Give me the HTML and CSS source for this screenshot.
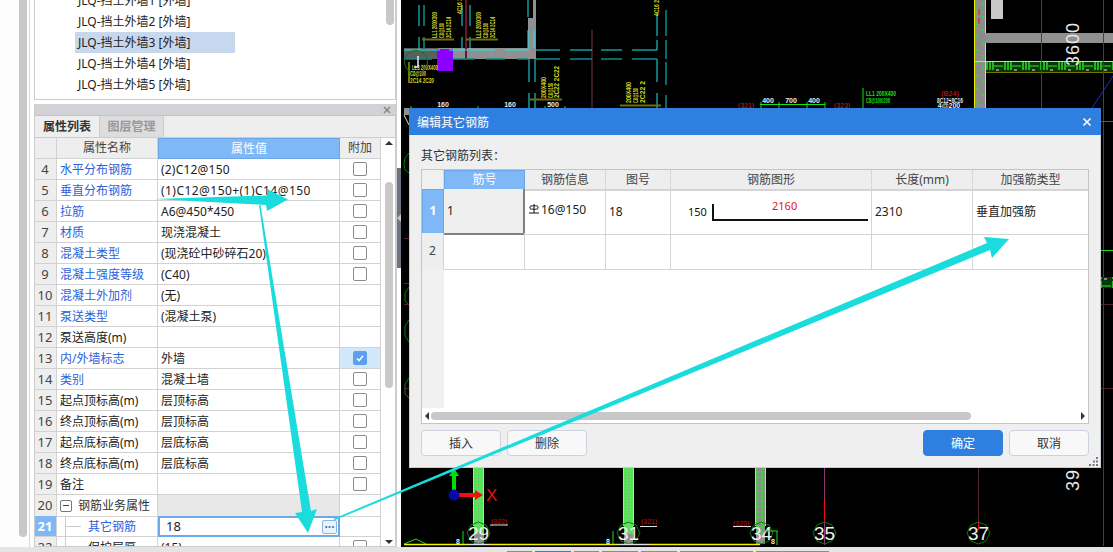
FILE: index.html
```html
<!DOCTYPE html>
<html lang="zh">
<head>
<meta charset="utf-8">
<title>编辑其它钢筋</title>
<link rel="stylesheet" href="styles.css">
</head>
<body>
<div class="page">
  <div class="main">
    <aside class="left">
      <div class="strip"><div class="strip-thumb"></div></div>
      <div class="panels">
        <section class="list-panel">
          <ul class="wall-list">
            <li><span>JLQ-挡土外墙1 [外墙]</span></li>
            <li><span>JLQ-挡土外墙2 [外墙]</span></li>
            <li class="sel"><span>JLQ-挡土外墙3 [外墙]</span></li>
            <li><span>JLQ-挡土外墙4 [外墙]</span></li>
            <li><span>JLQ-挡土外墙5 [外墙]</span></li>
          </ul>
          <div class="list-scroll"></div>
        </section>
        <section class="prop-panel">
          <div class="prop-head"><svg class="close-mini" viewBox="0 0 8 8"><path d="M1 1L7 7M7 1L1 7"/></svg></div>
          <div class="tabs"><div class="tab on">属性列表</div><div class="tab">图层管理</div></div>
          <div class="prop-body">
            <div class="prop-table">
              <div class="row head"><div class="c n"></div><div class="c name">属性名称</div><div class="c val hl">属性值</div><div class="c add">附加</div></div>
              <div class="row"><div class="c n">4</div><div class="c name link">水平分布钢筋</div><div class="c val lat">(2)C12@150</div><div class="c add"><i class="cb"></i></div></div>
              <div class="row"><div class="c n">5</div><div class="c name link">垂直分布钢筋</div><div class="c val wide">(1)C12@150+(1)C14@150</div><div class="c add"><i class="cb"></i></div></div>
              <div class="row"><div class="c n">6</div><div class="c name link">拉筋</div><div class="c val">A6@450*450</div><div class="c add"><i class="cb"></i></div></div>
              <div class="row"><div class="c n">7</div><div class="c name link">材质</div><div class="c val">现浇混凝土</div><div class="c add"><i class="cb"></i></div></div>
              <div class="row"><div class="c n">8</div><div class="c name link">混凝土类型</div><div class="c val">(现浇砼中砂碎石20)</div><div class="c add"><i class="cb"></i></div></div>
              <div class="row"><div class="c n">9</div><div class="c name link">混凝土强度等级</div><div class="c val">(C40)</div><div class="c add"><i class="cb"></i></div></div>
              <div class="row"><div class="c n">10</div><div class="c name link">混凝土外加剂</div><div class="c val">(无)</div><div class="c add"></div></div>
              <div class="row"><div class="c n">11</div><div class="c name link">泵送类型</div><div class="c val">(混凝土泵)</div><div class="c add"></div></div>
              <div class="row"><div class="c n">12</div><div class="c name">泵送高度(m)</div><div class="c val"></div><div class="c add"></div></div>
              <div class="row"><div class="c n">13</div><div class="c name link">内/外墙标志</div><div class="c val">外墙</div><div class="c add checked"><i class="cb on"><svg viewBox="0 0 14 14"><path d="M3.500 7.500L6 10L10.500 4.500"/></svg></i></div></div>
              <div class="row"><div class="c n">14</div><div class="c name link">类别</div><div class="c val">混凝土墙</div><div class="c add"><i class="cb"></i></div></div>
              <div class="row"><div class="c n">15</div><div class="c name">起点顶标高(m)</div><div class="c val">层顶标高</div><div class="c add"><i class="cb"></i></div></div>
              <div class="row"><div class="c n">16</div><div class="c name">终点顶标高(m)</div><div class="c val">层顶标高</div><div class="c add"><i class="cb"></i></div></div>
              <div class="row"><div class="c n">17</div><div class="c name">起点底标高(m)</div><div class="c val">层底标高</div><div class="c add"><i class="cb"></i></div></div>
              <div class="row"><div class="c n">18</div><div class="c name">终点底标高(m)</div><div class="c val">层底标高</div><div class="c add"><i class="cb"></i></div></div>
              <div class="row"><div class="c n">19</div><div class="c name">备注</div><div class="c val"></div><div class="c add"><i class="cb"></i></div></div>
              <div class="row"><div class="c n">20</div><div class="c name group"><i class="minus"></i><span>钢筋业务属性</span></div><div class="c val grey"></div><div class="c add"></div></div>
              <div class="row"><div class="c n cur">21</div><div class="c name tree link">其它钢筋</div><div class="c val edit"><span>18</span><button class="dots" type="button">···</button></div><div class="c add"></div></div>
              <div class="row"><div class="c n">22</div><div class="c name tree">保护层厚</div><div class="c val">(15)</div><div class="c add"><i class="cb"></i></div></div>
            </div>
            <div class="prop-scroll">
              <i class="tri up"></i>
              <div class="prop-track"><div class="prop-thumb"></div></div>
              <i class="tri down"></i>
            </div>
          </div>
        </section>
      </div>
      <div class="splitter"><i></i></div>
    </aside>

    <div class="canvas">
      <svg class="cad" viewBox="401 0 712 547" width="712" height="547">
        <defs>
          <pattern id="band" width="18" height="11" patternUnits="userSpaceOnUse" x="985" y="61">
            <rect width="18" height="11" fill="#063806"/>
            <path d="M2 0V9M5 0V9M8 0V9" stroke="#2ee62e" stroke-width="1.4"/>
            <path d="M9 5H18" stroke="#2ee62e"/>
            <path d="M11 9h3" stroke="#e6e6e6"/>
          </pattern>
          <pattern id="dots" width="10" height="13" patternUnits="userSpaceOnUse" x="975" y="0">
            <rect width="10" height="13" fill="#8c8c8c"/>
            <rect x="7" y="3" width="2" height="2" fill="#22e622"/>
            <rect x="1" y="10" width="2" height="2" fill="#22e622"/>
          </pattern>
          <pattern id="col" width="3" height="3" patternUnits="userSpaceOnUse">
            <rect width="3" height="3" fill="#58e458"/>
            <rect x="1" y="1" width="1" height="1" fill="#90a890"/>
          </pattern>
          <pattern id="col2" width="5" height="5" patternUnits="userSpaceOnUse">
            <rect width="5" height="5" fill="#8c8c8c"/>
            <path d="M0 2H5M2 0V5" stroke="#30e030"/>
          </pattern>
        </defs>

        <!-- walls -->
        <rect class="wall-d" x="404" y="48" width="34" height="11"/>
        <rect class="wall" x="438" y="48" width="98" height="11"/>
        <rect class="wall" x="528" y="18" width="8" height="30"/>
        <rect class="wall" x="533" y="0" width="3" height="20"/>
        <rect class="purple" x="437" y="49" width="16" height="22"/>
        <path class="dred" d="M466 0V60"/>
        <path class="dred2" d="M592 30V108"/>

        <!-- cyan members -->
        <path class="cy" d="M419 5V26M419 37V50M462 5V26M462 37V50M470 5V26M470 37V50M528 0V17M528 30V50M534 30V48M529 59V82M529 93V108M535 59V82M535 93V108M657 13V36M657 40V50M657 59V82M657 93V108M404 50H440M449 50H468M470 50H495M505 50H527M536 50H560M570 50H592M601 50H622M632 50H657"/>
        <path class="te" d="M424 5V26M424 37V50M404 59H432M453 59H475M486 59H505M517 59H528M536 59H560M570 59H592M601 59H622M632 59H657M666 10V36M666 40V59M666 62V85M666 95V108"/>

        <!-- yellow notes -->
        <g class="note">
          <text transform="translate(437 38) rotate(-90)" textLength="26" lengthAdjust="spacingAndGlyphs">LL1 200X300</text>
          <text transform="translate(444 38) rotate(-90)" textLength="15" lengthAdjust="spacingAndGlyphs">C8@100</text>
          <text transform="translate(451 38) rotate(-90)" textLength="21" lengthAdjust="spacingAndGlyphs">2C14 2C14</text>
          <text transform="translate(481 38) rotate(-90)" textLength="26" lengthAdjust="spacingAndGlyphs">LL2 200X300</text>
          <text transform="translate(488 38) rotate(-90)" textLength="15" lengthAdjust="spacingAndGlyphs">C8@100</text>
          <text transform="translate(495 38) rotate(-90)" textLength="21" lengthAdjust="spacingAndGlyphs">2C14 2C14</text>
          <text transform="translate(462 14) rotate(-90)" textLength="16" lengthAdjust="spacingAndGlyphs">4C16 2</text>
          <text transform="translate(659 16) rotate(-90)" textLength="16" lengthAdjust="spacingAndGlyphs">4C16 2</text>
          <text transform="translate(546 98) rotate(-90)" textLength="21" lengthAdjust="spacingAndGlyphs">200X400</text>
          <text transform="translate(553 98) rotate(-90)" textLength="15" lengthAdjust="spacingAndGlyphs">C8@150</text>
          <text transform="translate(559 98) rotate(-90)" textLength="32" lengthAdjust="spacingAndGlyphs">2C22 2C22</text>
          <text transform="translate(631 103) rotate(-90)" textLength="21" lengthAdjust="spacingAndGlyphs">200X400</text>
          <text transform="translate(638 103) rotate(-90)" textLength="15" lengthAdjust="spacingAndGlyphs">C8@150</text>
          <text transform="translate(645 103) rotate(-90)" textLength="22" lengthAdjust="spacingAndGlyphs">2C22 2</text>
          <text x="412" y="70" textLength="26" lengthAdjust="spacingAndGlyphs">LL3 200X400</text>
          <text x="410" y="76" textLength="16" lengthAdjust="spacingAndGlyphs">C8@100</text>
          <text x="410" y="83" textLength="24" lengthAdjust="spacingAndGlyphs">2C14 2C20</text>
        </g>
        <path class="yl" d="M409 62V83"/>
        <path class="ol" d="M422 39.500H454M466 39.500H498M530 99.500H562M620 105.500H661"/>
        <circle class="ring" cx="416" cy="62" r="11.500"/>
        <path class="wh2" d="M418 56V67H414"/>

        <!-- dims -->
        <g class="dim">
          <text x="443" y="107">160</text>
          <text x="510" y="107">160</text>
          <text x="553" y="107">500</text>
          <text x="768" y="103">400</text>
          <text x="791" y="103">700</text>
          <text x="814" y="103">400</text>
          <text x="950" y="103" textLength="26" lengthAdjust="spacingAndGlyphs">8C12+8C16</text>
          <text x="949" y="108">4@200</text>
        </g>
        <path class="gn" d="M760 104.500H825M761 102V108M779 102V108M807 102V108M825 102V108M411 106V108M478 106V108M545 106V108M565 106V108M863 88V108"/>
        <g class="red">
          <text x="746" y="108">(321)</text>
          <text x="842" y="108">(323)</text>
          <text x="950" y="96">(B24)</text>
        </g>
        <g class="gnote">
          <text x="866" y="96" textLength="30" lengthAdjust="spacingAndGlyphs">LL1 200X400</text>
          <text x="866" y="103" textLength="24" lengthAdjust="spacingAndGlyphs">C8@100/200</text>
        </g>

        <!-- right side -->
        <rect fill="url(#dots)" x="975" y="0" width="10" height="108"/>
        <path class="yl" d="M974.500 0V108M985.500 0V108M975 61.500H1113M985 72H1113"/>
        <path class="redl" d="M979 9V15M979 18V24"/>
        <rect class="wall" x="985" y="33" width="128" height="10"/>
        <rect class="block" x="991" y="0" width="12" height="19"/>
        <rect fill="url(#band)" x="986" y="62" width="127" height="10"/>
        <path class="dgn" d="M1041.500 0V108M1103.500 0V546"/>
        <text class="big" transform="translate(1079 66) rotate(-90)">3600</text>
        <path class="blue" d="M1113 76L1092 108"/>
        <path class="mag" d="M1089 121.500H1113"/>
        <path class="brg" d="M1089 250.500H1113"/>
        <rect fill="url(#band)" x="1100" y="277" width="13" height="11"/>
        <path class="dmag" d="M1089 304.500H1113M1089 388.500H1113"/>
        <text class="big" transform="translate(1079 491) rotate(-90)">39</text>

        <!-- left of dialog -->
        <rect class="wall" x="404" y="108" width="5" height="7"/>
        <path class="wh" d="M404 115L409 125"/>
        <path class="ring" d="M409 153L405 158L404 165L405 170L409 173M409 287L405 293V301L409 305M409 320L405 326V336L409 342M409 378L405 384V394L409 398"/>
        <path class="dmag" d="M404 238.500H409M404 283.500H409M404 304.500H409M404 388.500H409"/>

        <!-- columns below dialog -->
        <rect fill="url(#col)" x="474" y="468" width="10" height="66"/>
        <path class="yl" d="M473.500 468V526M483.500 468V526M623.500 468V526M633.500 468V526M755.500 468V526M765.500 468V526"/>
        <rect fill="url(#col)" x="624" y="468" width="9" height="66"/>
        <rect fill="url(#col2)" x="756" y="468" width="9" height="66"/>
        <rect class="wall" x="474" y="534" width="10" height="10"/>
        <rect class="wall" x="624" y="534" width="9" height="10"/>
        <rect class="wall" x="756" y="534" width="9" height="10"/>
        <path class="mag" d="M824.500 468V500M824.500 520V545"/>
        <path class="redl" d="M824.500 500V522M978.500 522V530"/>
        <path class="dmag" d="M978.500 468V522"/>

        <polygon class="ring" points="478.500,522 486,525 490,533 486,541 478.500,544 471,541 467,533 471,525"/>
        <polygon class="ring" points="628.500,522 636,525 640,533 636,541 628.500,544 621,541 617,533 621,525"/>
        <polygon class="ring" points="761.500,522 769,525 773,533 769,541 761.500,544 754,541 750,533 754,525"/>
        <polygon class="ring" points="824.500,522 832,525 836,533 832,541 824.500,544 817,541 813,533 817,525"/>
        <polygon class="ring" points="978.500,522 986,525 990,533 986,541 978.500,544 971,541 967,533 971,525"/>
        <g class="axis">
          <text x="478.500" y="540">29</text>
          <text x="628.500" y="540">31</text>
          <text x="761.500" y="540">34</text>
          <text x="824.500" y="540">35</text>
          <text x="978.500" y="540">37</text>
        </g>
        <g class="dred-t">
          <text x="491" y="524">(322)</text>
          <text x="641" y="524">(321)</text>
          <text x="733" y="526">(320)</text>
        </g>
        <path class="wh" d="M490 525H508M640 526.500H657M733 526.500H751"/>
        <path class="gn" d="M463 531V545M613 531V545M777 531V545M765 531H778"/>
        <path class="gn" d="M404 544L416 539L426 544"/>
        <path class="yl2" d="M404 544.500H760"/>
        <path class="wh" d="M468 544.500H490M618 544.500H650"/>
        <g class="dim">
          <text x="458" y="544">8</text>
          <text x="608" y="544">8</text>
          <text x="773" y="544">8</text>
        </g>

        <!-- origin gizmo -->
        <path class="gz-g" d="M454 494V476"/>
        <polygon class="gz-gh" points="454,468 449,476 459,476"/>
        <path class="gz-r" d="M454 495H476"/>
        <polygon class="gz-rh" points="483,495 475,490 475,500"/>
        <circle class="gz-b" cx="454" cy="495" r="5.500"/>
        <text class="gz-x" x="486" y="501">X</text>
      </svg>

      <div class="dialog">
        <header class="dlg-title">
          <span>编辑其它钢筋</span>
          <svg class="dlg-x" viewBox="0 0 10 10"><path d="M1.500 1.500L8.500 8.500M8.500 1.500L1.500 8.500"/></svg>
        </header>
        <div class="dlg-body">
          <div class="dlg-label">其它钢筋列表：</div>
          <div class="rebar">
            <div class="rb-row rb-head">
              <div class="rb n"></div><div class="rb hl">筋号</div><div class="rb">钢筋信息</div><div class="rb">图号</div><div class="rb">钢筋图形</div><div class="rb">长度(mm)</div><div class="rb">加强筋类型</div>
            </div>
            <div class="rb-row rb-one">
              <div class="rb n cur">1</div>
              <div class="rb cell focus">1</div>
              <div class="rb cell info"><svg class="grade" viewBox="0 0 10 10"><path d="M5 0V9M1 2.500C1 1.500 9 1.500 9 2.500V4.500C9 5.500 1 5.500 1 4.500ZM0 9H10"/></svg><span>16@150</span></div>
              <div class="rb cell">18</div>
              <div class="rb cell shape"><span class="sh-a">150</span><div class="sh-line"><span class="sh-b">2160</span></div></div>
              <div class="rb cell">2310</div>
              <div class="rb cell">垂直加强筋</div>
            </div>
            <div class="rb-row rb-two">
              <div class="rb n">2</div><div class="rb"></div><div class="rb"></div><div class="rb"></div><div class="rb"></div><div class="rb"></div><div class="rb"></div>
            </div>
            <div class="rb-fill"><div class="rb-fill-n"></div></div>
            <div class="rb-scroll">
              <i class="tri left"></i>
              <div class="rb-track"><div class="rb-thumb"></div></div>
              <i class="tri right"></i>
            </div>
          </div>
          <div class="dlg-btns">
            <button class="btn" type="button">插入</button>
            <button class="btn" type="button">删除</button>
            <span class="spacer"></span>
            <button class="btn primary" type="button">确定</button>
            <button class="btn" type="button">取消</button>
          </div>
          <svg class="grip" viewBox="0 0 9 9"><path d="M7 0h2v2H7zM4 3.500h2v2H4zM7 3.500h2v2H7zM0 7h2v2H0zM3.500 7h2v2h-2zM7 7h2v2H7z"/></svg>
        </div>
      </div>
    </div>
  </div>

  <div class="status">
    <i class="s s1"></i><i class="s s2"></i><i class="s s3"></i><i class="s s4"></i><i class="s s4"></i><i class="s s5"></i><i class="s s5"></i>
  </div>

  <svg class="arrows" viewBox="0 0 1113 552" width="1113" height="552">
    <polygon points="155,199 267,195.500 267,189 288,199.500 267,211 266,205"/>
    <polygon points="259,205 260.500,205 311,511 317,509 308,533 295,513 302,512"/>
    <polygon points="333,519 987,243 984,237 1009,239 992,258 990,250 335,520"/>
  </svg>
</div>
</body>
</html>
```

FILE: styles.css
```css
* { box-sizing: border-box; }
html, body { margin: 0; padding: 0; }
body {
  font-family: "Noto Sans", "Noto Sans CJK SC", sans-serif;
  font-size: 12px;
  color: #222;
  background: #fff;
  overflow: hidden;
}
.page { position: relative; width: 1113px; height: 552px; overflow: hidden; }
.main { display: flex; height: 547px; }

/* left column */
.left { width: 401px; display: flex; flex: none; background: #fff; }
.strip { width: 30px; flex: none; padding-left: 19px; border-right: 1px solid #d8d8d8; background: #fdfdfd; }
.strip-thumb { width: 8px; height: 537px; background: #c8c8c8; border-radius: 0 0 4px 4px; }
.panels { width: 363px; margin-left: 4px; flex: none; display: flex; flex-direction: column; gap: 4px; border-right: 1px solid #ccc; }
.splitter { width: 4px; height: 100px; margin-top: 168px; background: #6b7680; display: flex; align-items: center; }
.splitter i { width: 0; height: 0; border: 4px solid transparent; border-left-width: 0; border-right-color: #c4c8cc; }

.list-panel { height: 100px; flex: none; position: relative; border: 1px solid #ccc; border-top: 0; overflow: hidden; background: #fff; }
.wall-list { list-style: none; margin: -10px 0 0; padding: 0 0 0 40px; }
.wall-list li { height: 21px; line-height: 22px; }
.wall-list span { display: block; width: 160px; height: 21px; padding-left: 3px; }
.wall-list .sel span { background: #c7d7ee; }
.list-scroll { position: absolute; right: 1px; top: 0; width: 8px; height: 25px; background: #c8c8c8; border-radius: 0 0 4px 4px; }

.prop-panel { flex: 1; min-height: 0; display: flex; flex-direction: column; overflow: hidden; border: 1px solid #ccc; border-top: 0; }
.prop-head { height: 12px; flex: none; background: #d0d2d6; display: flex; justify-content: flex-end; align-items: center; padding-right: 4px; border-bottom: 1px solid #c4c4c4; }
.close-mini { width: 8px; height: 8px; }
.close-mini path { stroke: #888; stroke-width: 1.6; fill: none; }
.tabs { height: 22px; flex: none; display: flex; background: #eee; border-bottom: 1px solid #ccc; }
.tab { width: 65px; text-align: center; line-height: 21px; font-size: 12px; color: #999; background: #ddd; border-right: 1px solid #ccc; font-weight: 700; }
.tab.on { color: #333; background: #eee; border-right: 0; width: 64px; }
.tab + .tab { border-left: 1px solid #ccc; }

.prop-body { flex: 1; min-height: 0; display: flex; overflow: hidden; }
.prop-table { width: 346px; flex: none; }
.row { display: grid; grid-template-columns: 22px 101px 182px 41px; height: 21px; }
.c { border-right: 1px solid #d2d2d2; border-bottom: 1px solid #d2d2d2; line-height: 21px; padding-left: 3px; white-space: nowrap; overflow: hidden; color: #222; }
.c.n { background: #eee; padding: 0 1px 0 0; text-align: center; font-size: 13px; color: #444; }
.c.add { padding: 0; display: flex; align-items: center; justify-content: center; }
.c.link { color: #2a62dc; }
.c.lat { letter-spacing: .2px; }
.c.wide { letter-spacing: .45px; }
.head .c { background: #eee; text-align: center; color: #444; padding: 0; line-height: 20px; }
.head .c.hl { background: #7eb8f7; color: #fff; border: 1px solid #6aa6e6; }
.cb { display: block; width: 14px; height: 14px; border: 1px solid #8a8a8a; border-radius: 2px; background: #fff; }
.cb.on { background: #5a9ff0; border-color: #5a9ff0; }
.cb svg { display: block; width: 12px; height: 12px; }
.cb path { fill: none; stroke: #fff; stroke-width: 1.800; }
.c.checked { background: #d3e7fb; }
.c.grey { background: #e8e8e8; }
.c.group { display: flex; align-items: center; position: relative; overflow: visible; color: #333; }
.minus { width: 12px; height: 12px; margin-right: 6px; border: 1px solid #777; border-radius: 2px; background: #fff; position: relative; flex: none; }
.minus::after { content: ""; position: absolute; left: 2px; right: 2px; top: 4px; height: 1px; background: #444; }
.c.tree { padding-left: 31px; position: relative; }
.c.tree::before { content: ""; position: absolute; left: 8px; top: -1px; bottom: -1px; width: 1px; background: #ccc; }
.c.tree::after { content: ""; position: absolute; left: 8px; top: 10px; width: 16px; height: 1px; background: #ccc; }
.c.n.cur { background: #7eb8f7; color: #fff; font-weight: 700; }
.c.edit { border: 2px solid #6aaae8; display: flex; align-items: center; padding-left: 6px; line-height: 17px; font-size: 13px; justify-content: space-between; }
.dots { width: 15px; height: 14px; margin-right: 1px; padding: 0; border: 1px solid #88b4e8; border-radius: 2px; background: #eaf3fd; color: #3c72b8; font: 700 12px/10px "Noto Sans", sans-serif; }

.prop-scroll { width: 16px; flex: none; position: relative; display: flex; flex-direction: column; align-items: center; }
.tri { display: block; width: 0; height: 0; border: 4px solid transparent; flex: none; }
.tri.up { border-top: 0; border-bottom: 4px solid #333; margin-top: 3px; }
.tri.down { border-bottom: 0; border-top: 4px solid #333; position: absolute; top: 402px; }
.prop-track { width: 8px; margin-top: 37px; }
.prop-thumb { height: 206px; background: #c8c8c8; border-radius: 4px; }

/* canvas */
.canvas { flex: 1; position: relative; background: #000; overflow: hidden; }
.cad { display: block; }
.cad text { font-family: "Liberation Sans", sans-serif; }
.wall { fill: #909090; }
.wall-d { fill: #5e5e5e; }
.purple { fill: #8a00ff; }
.block { fill: #c8c8c8; }
.dred { stroke: #701030; stroke-width: 2; fill: none; }
.dred2 { stroke: #3c1828; stroke-width: 2; fill: none; }
.cy { stroke: #18e8ee; fill: none; stroke-width: 1; }
.te { stroke: #0a8c90; fill: none; stroke-width: 1.500; }
.note text { fill: #d8d820; font-size: 7px; font-weight: 700; }
.yl { stroke: #e8e800; fill: none; }
.yl2 { stroke: #f0f000; fill: none; stroke-width: 1.500; }
.ol { stroke: #6e6e10; fill: none; stroke-width: 2; }
.ring { stroke: #0c7a0c; fill: none; }
.wh { stroke: #e0e0e0; fill: none; }
.wh2 { stroke: #f0f0f0; fill: none; stroke-width: 1.500; }
.dim text { fill: #e8e8e8; font-size: 7px; font-weight: 700; text-anchor: middle; }
.gn { stroke: #18e018; fill: none; }
.dgn { stroke: #0a6a0a; fill: none; }
.brg { stroke: #18e018; fill: none; }
.blue { stroke: #1030d0; fill: none; }
.mag { stroke: #8a3a70; fill: none; }
.dmag { stroke: #4c2038; fill: none; }
.redl { stroke: #e81010; fill: none; }
.red text { fill: #b00c0c; font-size: 7px; font-weight: 700; text-anchor: middle; }
.dred-t text { fill: #900c0c; font-size: 7px; font-weight: 700; }
.gnote text { fill: #18e018; font-size: 7px; font-weight: 700; }
.big { fill: #e8e8e8; font-size: 18px; letter-spacing: 1px; }
.axis text { fill: #f0f0f0; font-size: 19px; text-anchor: middle; }
.gz-g { stroke: #00e000; stroke-width: 4; fill: none; }
.gz-gh { fill: #00e000; }
.gz-r { stroke: #f01010; stroke-width: 4; fill: none; }
.gz-rh { fill: #f01010; }
.gz-b { fill: #0808a8; }
.gz-x { fill: #e81010; font-size: 17px; }

/* dialog */
.dialog { position: absolute; left: 8px; top: 108px; width: 692px; height: 360px; background: #efefef; box-shadow: 0 0 0 1px #c8ccd2 inset; display: flex; flex-direction: column; }
.dlg-title { height: 27px; flex: none; background: #2e7fe0; color: #fff; display: flex; align-items: center; justify-content: space-between; padding: 0 9px 0 8px; }
.dlg-x { width: 10px; height: 10px; }
.dlg-x path { stroke: #fff; stroke-width: 1.600; fill: none; }
.dlg-body { flex: 1; position: relative; padding: 12px 12px 0; }
.dlg-label { height: 22px; line-height: 18px; color: #333; }
.rebar { width: 668px; height: 255px; border: 1px solid #c4c4c4; background: #fff; display: flex; flex-direction: column; }
.rb-row { display: grid; grid-template-columns: 22px 81px 81px 65px 201px 101px 1fr; flex: none; }
.rb { border-right: 1px solid #d4d4d4; border-bottom: 1px solid #d4d4d4; line-height: 18px; white-space: nowrap; }
.rb:last-child { border-right: 0; }
.rb-head { height: 19px; }
.rb-head .rb { background: #eee; text-align: center; color: #444; border-bottom-width: 2px; border-right-color: #d8d8d8; line-height: 19px; }
.rb-head .rb.hl { background: #7eb8f7; color: #fff; border: 1px solid #6aa6e6; line-height: 17px; }
.rb.n { background: #eee; text-align: center; color: #444; font-size: 12px; }
.rb-head .rb.n { background: #f0f0f0; }
.rb-one { height: 44px; }
.rb-two { height: 36px; }
.rb-two .rb.n { line-height: 36px; }
.rb-one .rb.n.cur { background: #7eb8f7; color: #fff; font-weight: 700; line-height: 42px; border: 1px solid #6aa6e6; }
.rb.cell { line-height: 45px; padding-left: 3px; color: #222; }
.rb.focus { background: #efefef; border-right: 2px solid #808080; border-bottom: 2px solid #808080; padding-left: 3px; line-height: 44px; }
.rb.info { display: flex; align-items: center; padding: 0 0 3px 4px; line-height: 16px; }
.grade { width: 10px; height: 10px; margin-right: 2px; margin-top: -2px; flex: none; }
.grade path { stroke: #111; fill: none; stroke-width: 1; }
.rb.shape { padding: 15px 3px 0 17px; display: flex; align-items: flex-start; line-height: 16px; font-size: 11px; }
.sh-a { margin-top: 0; color: #111; width: 24px; flex: none; }
.sh-line { flex: 1; height: 17px; border-left: 2px solid #111; border-bottom: 2px solid #111; position: relative; }
.sh-b { position: absolute; left: 58px; top: -5px; color: #f01010; font-size: 11px; line-height: 14px; }
.rb-fill { flex: 1; min-height: 0; }
.rb-fill-n { width: 22px; height: 100%; background: #f0f0f0; }
.rb-scroll { height: 15px; flex: none; display: flex; align-items: center; padding: 0 3px; }
.tri.left { border-left: 0; border-right: 4px solid #333; }
.tri.right { border-right: 0; border-left: 4px solid #333; }
.rb-track { flex: 1; padding: 0 2px; }
.rb-thumb { width: 540px; height: 8px; border-radius: 4px; background: #c8c8c8; }
.dlg-btns { display: flex; gap: 6px; margin-top: 6px; width: 668px; }
.spacer { flex: 1; }
.btn { width: 80px; height: 26px; padding: 0; border: 1px solid #ccd3e0; border-radius: 4px; background: #f8f8f8; color: #333; font: 12px "Noto Sans", "Noto Sans CJK SC", sans-serif; }
.btn.primary { background: #2e7fe0; border-color: #2e7fe0; color: #fff; }
.grip { position: absolute; right: 3px; bottom: 2px; width: 9px; height: 9px; }
.grip path { fill: #777; }

/* status strip */
.status { height: 5px; background: #e4e4e4; display: flex; align-items: flex-end; gap: 3px; padding-left: 507px; }
.s { display: block; height: 1px; background: #8c8c8c; }
.s1 { width: 25px; }
.s2 { width: 36px; background: #2e7fe0; }
.s3 { width: 25px; }
.s4 { width: 36px; }
.s5 { width: 73px; }

/* annotation arrows */
.arrows { position: absolute; left: 0; top: 0; pointer-events: none; }
.arrows polygon { fill: #1adcdc; }
```
